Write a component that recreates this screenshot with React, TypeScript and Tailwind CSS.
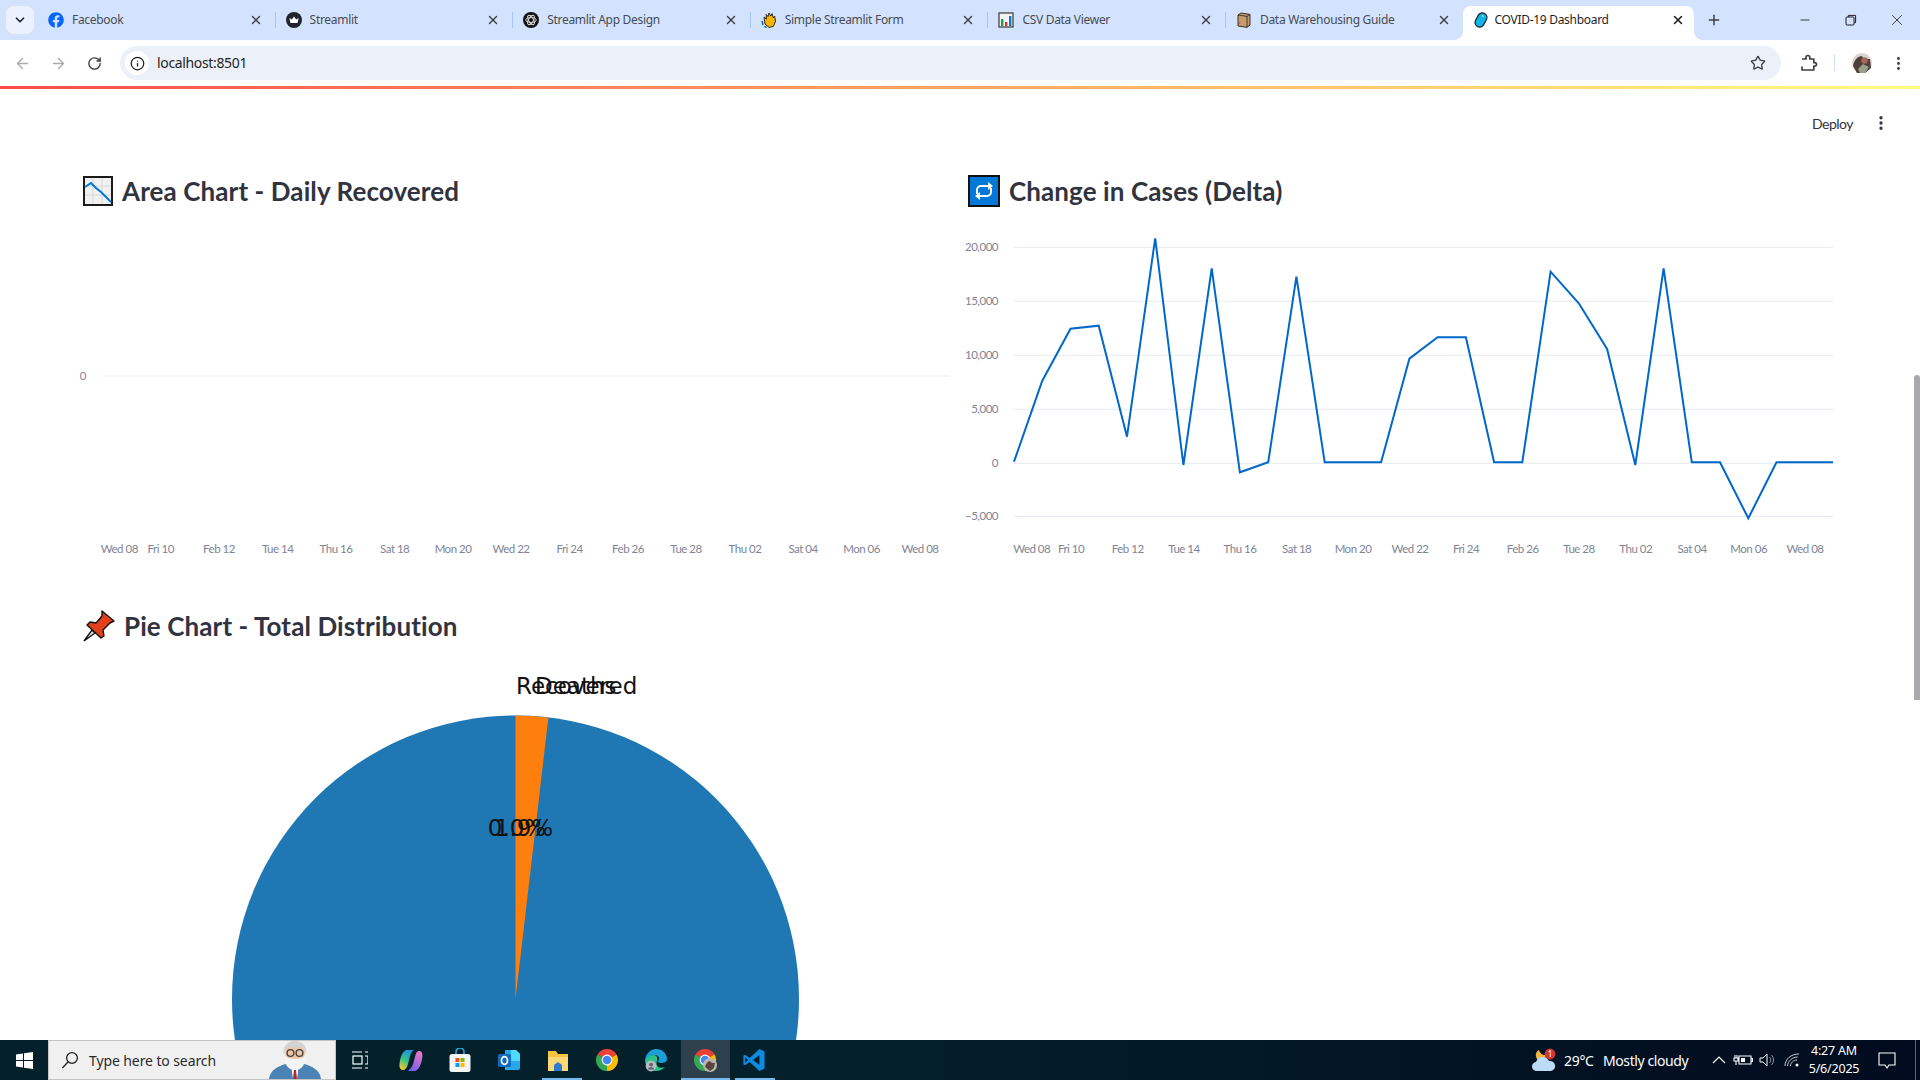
import {
  ArrowLeft,
  ArrowRight,
  ChevronDown,
  EllipsisVertical,
  Info,
  Minus,
  Plus,
  RotateCw,
  Star,
  X,
} from "lucide-react";
import type { ReactNode } from "react";
import { FaFacebook } from "react-icons/fa";

const uiFont = "font-['Noto_Sans','Open_Sans',sans-serif]";
const pageFont = "font-['Lato','Noto_Sans',sans-serif]";

/* ---------- favicons ---------- */

function CrownIcon() {
  return (
    <svg viewBox="0 0 16 16" className="h-4 w-4">
      <circle cx="8" cy="8" r="8" fill="#20242c" />
      <path d="M3.4 6l2.5 1.6L8 4.6l2.1 3L12.6 6l-1 5H4.4z" fill="#fff" />
    </svg>
  );
}

function KnotIcon() {
  return (
    <svg viewBox="0 0 16 16" className="h-4 w-4">
      <circle cx="8" cy="8" r="8" fill="#111" />
      <g fill="none" stroke="#ddd" strokeWidth="0.9">
        <ellipse cx="8" cy="8" rx="5.2" ry="2.4" />
        <ellipse cx="8" cy="8" rx="5.2" ry="2.4" transform="rotate(60 8 8)" />
        <ellipse cx="8" cy="8" rx="5.2" ry="2.4" transform="rotate(120 8 8)" />
      </g>
    </svg>
  );
}

function WaveIcon() {
  return (
    <svg viewBox="0 0 16 16" className="h-4 w-4">
      <path d="M3 5l1 7 4 3.4 4.4-1L14.6 9l-1-5-1.2 2L11 1.6 9.8 4 8 1 7 4.6 5.2 2.4 5.4 7z" fill="#f7b500" stroke="#1b1b1b" strokeWidth="0.9" />
      <path d="M1 9l1 4M3.4 14.4l2 1" stroke="#0e5a8a" strokeWidth="1.4" />
    </svg>
  );
}

function BarsIcon() {
  return (
    <svg viewBox="0 0 16 16" className="h-4 w-4">
      <rect x="1" y="1" width="14" height="14" fill="#f4f4f4" stroke="#444" strokeWidth="1.3" />
      <rect x="3" y="7" width="2.4" height="7" fill="#16a34a" />
      <rect x="7" y="10" width="2.4" height="4" fill="#e03131" />
      <rect x="11" y="4" width="2.4" height="10" fill="#0b78d1" />
    </svg>
  );
}

function BoxIcon() {
  return (
    <svg viewBox="0 0 16 16" className="h-4 w-4">
      <path d="M2 3l3-2 9 1.4V13l-3 2.4L2 14z" fill="#c89a6c" stroke="#222" strokeWidth="0.9" />
      <path d="M11 4.4V15M2 3l9 1.4L14 2.4" fill="none" stroke="#222" strokeWidth="0.8" />
      <rect x="3" y="10" width="1.4" height="2" fill="#e05a7a" />
    </svg>
  );
}

function PillIcon() {
  return (
    <svg viewBox="0 0 16 16" className="h-4 w-4">
      <rect x="3.4" y="0.6" width="9.2" height="14.8" rx="4.6" transform="rotate(28 8 8)" fill="#12b5e8" stroke="#10202c" strokeWidth="1.2" />
      <path d="M9 3.6l1.6 1" stroke="#c8f2ff" strokeWidth="1.2" />
    </svg>
  );
}

const tabs: { title: string; icon: ReactNode }[] = [
  { title: "Facebook", icon: <FaFacebook className="h-4 w-4 text-[#0866ff]" /> },
  { title: "Streamlit", icon: <CrownIcon /> },
  { title: "Streamlit App Design", icon: <KnotIcon /> },
  { title: "Simple Streamlit Form", icon: <WaveIcon /> },
  { title: "CSV Data Viewer", icon: <BarsIcon /> },
  { title: "Data Warehousing Guide", icon: <BoxIcon /> },
];

function TabStrip() {
  return (
    <div className={`flex h-10 shrink-0 items-end bg-[#d3e3fd] text-[12px] tracking-[-0.3px] ${uiFont}`}>
      <div className="mb-[6px] ml-[6px] mr-[4px] flex h-7 w-7 items-center justify-center rounded-lg bg-[#ebf2fd]">
        <ChevronDown size={14} strokeWidth={3} className="text-[#1f2937]" />
      </div>
      {tabs.map((tab, i) => (
        <div key={tab.title} className="flex h-10 w-[237.6px] items-center pl-[10px] text-[#474c54]">
          {tab.icon}
          <span className="ml-2 flex-1 truncate">{tab.title}</span>
          <X size={14} strokeWidth={2.4} className="mr-[12px] text-[#3c4043]" />
          {i < 5 ? <div className="h-4 w-px bg-[#a8c7fa]" /> : <div className="w-px" />}
        </div>
      ))}
      <div className="relative ml-[-1px] flex h-[34px] w-[231px] items-center rounded-t-lg bg-white pb-[6px] pl-[10px] text-[#1f1f1f]">
        <div className="absolute bottom-0 left-[-8px] h-2 w-2 bg-[radial-gradient(circle_at_0_0,#d3e3fd_7.5px,#ffffff_8px)]" />
        <div className="absolute bottom-0 right-[-8px] h-2 w-2 bg-[radial-gradient(circle_at_100%_0,#d3e3fd_7.5px,#ffffff_8px)]" />
        <PillIcon />
        <span className="ml-[6px] flex-1 truncate">COVID-19 Dashboard</span>
        <X size={14} strokeWidth={2.6} className="mr-[9px] text-[#1f1f1f]" />
      </div>
      <div className="mb-[6px] ml-[12px] flex h-7 w-4 items-center justify-center">
        <Plus size={16} strokeWidth={2.2} className="text-[#3c4043]" />
      </div>
      <div className="ml-auto flex h-10 items-center text-[#1f1f1f]">
        <div className="flex w-[46px] justify-center">
          <Minus size={14} strokeWidth={1.4} />
        </div>
        <div className="flex w-[46px] justify-center">
          <svg viewBox="0 0 12 12" className="h-3 w-3" fill="none" stroke="currentColor" strokeWidth="1">
            <rect x="1" y="3" width="8" height="8" rx="1" />
            <path d="M3.4 3V1.4h7.2v7.2H9" />
          </svg>
        </div>
        <div className="flex w-[46px] justify-center">
          <X size={18} strokeWidth={1.1} />
        </div>
      </div>
    </div>
  );
}

function Toolbar() {
  return (
    <div className={`flex h-[46px] shrink-0 items-center bg-white pl-1 ${uiFont}`}>
      <div className="flex w-9 justify-center text-[#a9abae]">
        <ArrowLeft size={17} strokeWidth={2} />
      </div>
      <div className="flex w-9 justify-center text-[#a9abae]">
        <ArrowRight size={17} strokeWidth={2} />
      </div>
      <div className="flex w-9 justify-center text-[#3c4043]">
        <RotateCw size={15} strokeWidth={2.2} />
      </div>
      <div className="ml-2 flex h-[34px] flex-1 items-center rounded-full bg-[#ecf1f9] pl-[5px] pr-[15px]">
        <div className="flex h-6 w-6 items-center justify-center rounded-full bg-white">
          <Info size={15} strokeWidth={2} className="text-[#1f1f1f]" />
        </div>
        <span className="ml-[8px] flex-1 pb-[2px] text-[14px] tracking-[-0.35px] text-[#1f1f1f]">localhost:8501</span>
        <Star size={16} strokeWidth={2} className="text-[#3c4043]" />
      </div>
      <div className="flex w-[139px] items-center">
        <svg viewBox="0 0 18 18" className="ml-[19px] h-[18px] w-[18px]" fill="none" stroke="#3c4043" strokeWidth="1.7" strokeLinejoin="round">
          <path d="M2 5h4V3.4a1.9 1.9 0 0 1 3.8 0V5h4v3.6h1a1.6 1.6 0 0 1 0 3.4h-1v4H2v-3.4" />
        </svg>
        <div className="ml-[16px] h-4 w-px bg-[#cfdcf0]" />
        <svg viewBox="0 0 20 20" className="ml-[17px] h-5 w-5">
          <circle cx="10" cy="10" r="10" fill="#d9d4cf" />
          <path d="M1 13c1-6 5-10 9-10 1 3 5 3 8 3l1 9-6 5H5z" fill="#4f3f3a" />
          <circle cx="12.5" cy="7.5" r="3.2" fill="#a4665c" />
          <path d="M6 16l5-5 6 3-4 6H8z" fill="#9a9f8c" />
        </svg>
        <EllipsisVertical size={17} strokeWidth={2.2} className="ml-[18px] text-[#3c4043]" />
      </div>
    </div>
  );
}

/* ---------- charts ---------- */

const deltaPoints = [
  725, 483, 326, 317, 650, 55, 735, 145, 757, 727, 170, 727, 727, 727, 416, 352, 352, 727, 727, 155, 250, 387, 735, 145,
  727, 727, 895, 727, 727, 727,
];

const linePath = deltaPoints
  .map((z, i) => `${i === 0 ? "M" : "L"}${(1014 + (i * 819) / 29).toFixed(1)} ${(220 + z / 3).toFixed(1)}`)
  .join(" ");

const areaTicks = [
  ["Wed 08", 119.3],
  ["Fri 10", 160.7],
  ["Feb 12", 219],
  ["Tue 14", 277.7],
  ["Thu 16", 336],
  ["Sat 18", 394.7],
  ["Mon 20", 453],
  ["Wed 22", 511],
  ["Fri 24", 569.5],
  ["Feb 26", 628],
  ["Tue 28", 686],
  ["Thu 02", 745],
  ["Sat 04", 803],
  ["Mon 06", 861.6],
  ["Wed 08", 920],
] as const;

const deltaTicks = [
  ["Wed 08", 1031.7],
  ["Fri 10", 1071],
  ["Feb 12", 1127.7],
  ["Tue 14", 1184],
  ["Thu 16", 1240],
  ["Sat 18", 1296.7],
  ["Mon 20", 1353],
  ["Wed 22", 1410],
  ["Fri 24", 1466],
  ["Feb 26", 1522.7],
  ["Tue 28", 1579],
  ["Thu 02", 1635.7],
  ["Sat 04", 1692],
  ["Mon 06", 1748.7],
  ["Wed 08", 1805],
] as const;

const deltaGrid = [
  ["20,000", 247.3],
  ["15,000", 301.3],
  ["10,000", 355.3],
  ["5,000", 409.3],
  ["0", 463.3],
  ["−5,000", 516.3],
] as const;

function AreaChart() {
  return (
    <svg viewBox="83 225 869 335" className={`block h-[335px] w-[869px] overflow-visible text-[11.5px] tracking-[-0.5px] ${pageFont}`}>
      <line x1="102.7" x2="950" y1="376" y2="376" stroke="#e6eaf1" />
      <text x="86" y="380" textAnchor="end" fill="#808495">0</text>
      {areaTicks.map(([label, x]) => (
        <text key={`${label}${x}`} x={x} y="553" textAnchor="middle" fill="#808495">{label}</text>
      ))}
    </svg>
  );
}

function DeltaChart() {
  return (
    <svg viewBox="968 225 872 335" className={`block h-[335px] w-[872px] overflow-visible text-[11.5px] tracking-[-0.5px] ${pageFont}`}>
      {deltaGrid.map(([label, y]) => (
        <g key={label}>
          <line x1="1014" x2="1833" y1={y} y2={y} stroke="#e6eaf1" />
          <text x="998" y={y + 4} textAnchor="end" fill="#808495">{label}</text>
        </g>
      ))}
      {deltaTicks.map(([label, x]) => (
        <text key={`${label}${x}`} x={x} y="553" textAnchor="middle" fill="#808495">{label}</text>
      ))}
      <path d={linePath} fill="none" stroke="#0068c9" strokeWidth="2" strokeLinejoin="miter" />
    </svg>
  );
}

function PieChart() {
  return (
    <svg viewBox="83 659 869 381" className="block h-[381px] w-[869px] text-[23px] font-['DejaVu_Sans',sans-serif]">
      <circle cx="515.5" cy="999" r="283.5" fill="#1f77b4" />
      <path d="M515.5 999V715.5A283.5 283.5 0 0 1 548.4 717.4Z" fill="#ff7f0e" />
      <text x="516" y="694" fill="#111">Recovered</text>
      <text x="535" y="694" fill="#111">Deaths</text>
      <text x="517" y="836" textAnchor="middle" fill="#111">0.0%</text>
      <text x="524" y="836" textAnchor="middle" fill="#111">1.9%</text>
    </svg>
  );
}

/* ---------- heading emoji ---------- */

function ChartDownEmoji() {
  return (
    <svg viewBox="0 0 30 30" className="h-[30px] w-[30px]">
      <rect x="1" y="1" width="28" height="28" fill="#f1f1f1" stroke="#1a1a1a" strokeWidth="2" />
      <path d="M10 2v26M19 2v26M2 10h26M2 19h26" stroke="#d8d8d8" strokeWidth="1" />
      <path d="M2 11l6-4 5 5 5 4 10 10" fill="none" stroke="#0078d7" strokeWidth="2" />
    </svg>
  );
}

function RepeatEmoji() {
  return (
    <svg viewBox="0 0 32 32" className="h-8 w-8">
      <rect x="1" y="1" width="30" height="30" fill="#0078d7" stroke="#111" strokeWidth="2" />
      <path d="M9 19v-4a4 4 0 0 1 4-4h10M23 13v4a4 4 0 0 1-4 4H9" fill="none" stroke="#fff" strokeWidth="2" />
      <path d="M20 7l5 4-5 4zM12 17l-5 4 5 4z" fill="#fff" />
    </svg>
  );
}

function PinEmoji() {
  return (
    <svg viewBox="0 0 33 32" className="ml-[-1px] h-8 w-[33px]">
      <path d="M2 31l8-11 3 3z" fill="#e6e6e6" stroke="#111" strokeWidth="1.4" />
      <path d="M20 1l12 10-4 2-7 7 1 6-3 2-14-13 3-3 6 1 6-7z" fill="#e2401b" stroke="#111" strokeWidth="1.4" strokeLinejoin="round" />
    </svg>
  );
}

function Heading({ icon, children }: { icon: ReactNode; children: ReactNode }) {
  return (
    <div className="flex items-center gap-[9px]">
      {icon}
      <h2 className={`text-[26px] font-bold leading-none tracking-[0.1px] text-[#31333f] ${pageFont}`}>{children}</h2>
    </div>
  );
}

function Dashboard() {
  return (
    <main className="relative min-h-0 flex-1 overflow-hidden bg-white">
      <div className={`flex h-[68px] items-center justify-end pr-[30px] text-[14px] tracking-[-0.5px] text-[#31333f] ${pageFont}`}>
        <span>Deploy</span>
        <EllipsisVertical size={18} strokeWidth={2.4} className="ml-[19px]" />
      </div>
      <div className="grid grid-cols-[869px_872px] gap-x-4 pl-[83px]">
        <div>
          <div className="flex h-[68px] items-center">
            <Heading icon={<ChartDownEmoji />}>Area Chart - Daily Recovered</Heading>
          </div>
          <AreaChart />
        </div>
        <div>
          <div className="flex h-[68px] items-center">
            <Heading icon={<RepeatEmoji />}>Change in Cases (Delta)</Heading>
          </div>
          <DeltaChart />
        </div>
      </div>
      <div className="mt-[33px] pl-[83px]">
        <div className="mb-[1px] flex h-[65px] items-center">
          <Heading icon={<PinEmoji />}>Pie Chart - Total Distribution</Heading>
        </div>
        <PieChart />
      </div>
      <div className="absolute right-0 top-[286px] h-[325px] w-[6px] rounded-t-sm bg-[#a9a9ae]" />
    </main>
  );
}

/* ---------- taskbar ---------- */

function Chrome({ badge }: { badge?: boolean }) {
  return (
    <svg viewBox="0 0 24 24" className="h-6 w-6">
      <path d="M12 12L2.47 6.5A11 11 0 0 1 21.53 6.5Z" fill="#ea4335" />
      <path d="M12 12L21.53 6.5A11 11 0 0 1 12 23Z" fill="#fbbc04" />
      <path d="M12 12L12 23A11 11 0 0 1 2.47 6.5Z" fill="#34a853" />
      <circle cx="12" cy="12" r="5.4" fill="#fff" />
      <circle cx="12" cy="12" r="4.3" fill="#4285f4" />
      {badge && (
        <g>
          <circle cx="17" cy="17" r="7" fill="#bdb5ae" />
          <path d="M12 19c1-4 3-6 5-6 1 2 3 2 5 2l-1 5-4 3z" fill="#5a4640" />
        </g>
      )}
    </svg>
  );
}

function TaskItem({ children, line, active }: { children: ReactNode; line?: string; active?: boolean }) {
  return (
    <div className={`relative flex h-10 w-[49px] items-center justify-center ${active ? "bg-[#2d404b]" : ""}`}>
      {children}
      {line && <div className={`absolute bottom-0 h-[2px] bg-[#76b9ed] ${line}`} />}
    </div>
  );
}

function Taskbar() {
  return (
    <footer className={`flex h-10 shrink-0 items-center bg-[linear-gradient(90deg,#03202b,#03202b_45%,#020b1f)] text-white ${uiFont}`}>
      <div className="flex w-[48px] justify-center">
        <svg viewBox="0 0 17 17" className="h-[17px] w-[17px]" fill="#fff">
          <path d="M0 2.4L7 1.4V8H0zM8 1.2L17 0V8H8zM0 9h7v6.6L0 14.6zM8 9h9v8l-9-1.2z" />
        </svg>
      </div>
      <div className="relative flex h-10 w-[288px] items-center overflow-hidden border border-[#c4c4c4] bg-[#f0f0f0] pl-[12px] text-[14px] text-[#2b2b2b]">
        <svg viewBox="0 0 18 18" className="h-[18px] w-[18px]" fill="none" stroke="#222" strokeWidth="1.3">
          <circle cx="11" cy="7" r="5.4" />
          <path d="M7 11l-5.6 6" />
        </svg>
        <span className="ml-[10px] tracking-[-0.1px]">Type here to search</span>
        <svg viewBox="0 0 52 38" className="absolute bottom-0 left-[220px] h-[38px] w-[52px]">
          <path d="M0 38c1-9 9-13 17-15h18c8 2 16 6 17 15z" fill="#4a83b4" />
          <path d="M22 23h8l-2 15h-4z" fill="#fff" />
          <path d="M25 29h2l1 9h-4z" fill="#b02a30" />
          <ellipse cx="26" cy="12" rx="10" ry="12" fill="#eec6a6" />
          <path d="M15 14c-2-9 4-14 11-14s13 5 11 14c-1-5-3-7-4-8-4 1-10 1-14 0-1 1-3 3-4 8z" fill="#d4d4d4" />
          <path d="M16 15c2 2 6 3 10 3s8-1 10-3c1 8-3 14-10 14s-11-6-10-14z" fill="#f4f4f4" />
          <g fill="none" stroke="#444" strokeWidth="1.4">
            <circle cx="21.5" cy="12" r="3.4" />
            <circle cx="30.5" cy="12" r="3.4" />
          </g>
        </svg>
      </div>
      <div className="flex w-[48px] justify-center">
        <svg viewBox="0 0 16 18" className="h-[18px] w-4" fill="none" stroke="#fff" strokeWidth="1.2">
          <path d="M0 1h10M0 17h10M13 1h3M13 17h3M13 5h3v8h-3" />
          <rect x="1" y="5" width="9" height="8" />
        </svg>
      </div>
      <div className="ml-[2.5px] flex">
        <TaskItem>
          <svg viewBox="0 0 24 24" className="h-6 w-6">
            <defs>
              <linearGradient id="cpA" x1="0.7" y1="0" x2="0.3" y2="1">
                <stop offset="0" stopColor="#1c8fe0" />
                <stop offset="0.55" stopColor="#35c48a" />
                <stop offset="1" stopColor="#f7c52f" />
              </linearGradient>
              <linearGradient id="cpB" x1="0.7" y1="0" x2="0.3" y2="1">
                <stop offset="0" stopColor="#e87ac2" />
                <stop offset="1" stopColor="#7c5cf0" />
              </linearGradient>
            </defs>
            <path d="M15 23h-6l2-2c2-2 3-4 3.6-7l1.6-6c.8-3.2 2-5 4-5 2.6 0 3.6 2.6 3.2 6-.6 6-3.4 14-8.4 14z" fill="url(#cpB)" />
            <path d="M8 2h7c-2 1-3 3-4 6l-2 8c-1 4-3 6-5 6-3 0-4-3-3.4-7C1.4 9 4 2 8 2z" fill="url(#cpA)" />
          </svg>
        </TaskItem>
        <TaskItem>
          <svg viewBox="0 0 24 24" className="h-6 w-6">
            <path d="M8 7V4a4 4 0 0 1 8 0v3" fill="none" stroke="#2aa6e0" strokeWidth="1.6" />
            <rect x="1.5" y="6" width="21" height="18" rx="2.5" fill="#f4f4f4" />
            <rect x="7.5" y="10" width="4" height="4" fill="#f25022" />
            <rect x="12.5" y="10" width="4" height="4" fill="#7fba00" />
            <rect x="7.5" y="15" width="4" height="4" fill="#00a4ef" />
            <rect x="12.5" y="15" width="4" height="4" fill="#ffb900" />
          </svg>
        </TaskItem>
        <TaskItem>
          <svg viewBox="0 0 24 24" className="h-6 w-6">
            <path d="M8 2h11l4 4v14a2 2 0 0 1-2 2H8z" fill="#28a8ea" />
            <path d="M14 2h5l4 4v7h-9z" fill="#50d9ff" />
            <rect x="1" y="6" width="13" height="13" rx="1.5" fill="#0f6cbd" />
            <ellipse cx="7.5" cy="12.5" rx="3" ry="3.8" fill="none" stroke="#fff" strokeWidth="1.7" />
          </svg>
        </TaskItem>
        <TaskItem line="left-[8px] w-[40px]">
          <svg viewBox="0 0 24 24" className="h-6 w-6">
            <path d="M2 3h8l2 3h10v17H2z" fill="#f9c440" />
            <path d="M2 9h20v14H2z" fill="#fcd975" />
            <path d="M8 23v-6l4-3 4 3v6z" fill="#2b7cd3" />
          </svg>
        </TaskItem>
        <TaskItem>
          <Chrome />
        </TaskItem>
        <TaskItem>
          <svg viewBox="0 0 24 24" className="h-6 w-6">
            <path d="M1 12C2 5 7 1 12 1c6 0 11 4 11 10 0 3-3 4-6 4-2 0-3-1-3-2 2-2 1-6-3-6-4 0-7 2-10 5z" fill="#1b9fd8" />
            <path d="M1 12c2-3 5-5 9-5 3 0 4 4 3 6-2 5 2 8 8 6-3 3-6 4-9 4-6 0-11-5-11-11z" fill="#29c28b" />
            <circle cx="7" cy="18" r="5.4" fill="#b8bcc0" />
            <circle cx="7" cy="16.6" r="1.9" fill="#5c646c" />
            <path d="M3.4 21.6a3.8 3.8 0 0 1 7.2 0z" fill="#5c646c" />
          </svg>
        </TaskItem>
        <TaskItem active line="left-0 w-full">
          <Chrome badge />
        </TaskItem>
        <TaskItem line="left-[5px] w-[40px]">
          <svg viewBox="0 0 24 24" className="h-6 w-6" fill="#0d8be0">
            <path d="M17.4 1L22.6 3.4V20.6L17.4 23 7.6 13.9 3.2 17.2 1.4 16.2V7.8L3.2 6.8 7.6 10.1zM17.4 7.2L10.9 12 17.4 16.8zM3.2 9.2V14.8L6 12z" fillRule="evenodd" />
          </svg>
        </TaskItem>
      </div>
      <div className="ml-auto flex h-10 w-[388px] items-center text-[14px]">
        <svg viewBox="0 0 24 24" className="h-6 w-6">
          <path d="M7 2a6 6 0 0 0 1 11 6 6 0 0 0 6-6 6 6 0 0 1-7-5z" fill="#f5b83d" />
          <path d="M5 23a4.5 4.5 0 0 1-1-9 7 7 0 0 1 13-1 5 5 0 0 1 2 10z" fill="#bcdcf6" />
          <circle cx="18" cy="6" r="5.4" fill="#d13438" />
          <text x="18" y="9" textAnchor="middle" fontSize="8" fill="#fff">1</text>
        </svg>
        <span className="ml-2 w-[39px] tracking-[-0.3px]">29°C</span>
        <span className="w-[108px] tracking-[-0.4px]">Mostly cloudy</span>
        <svg viewBox="0 0 16 16" className="h-4 w-4" fill="none" stroke="#fff" strokeWidth="1.1">
          <path d="M2 11l6-6 6 6" />
        </svg>
        <svg viewBox="0 0 20 16" className="ml-[6px] h-4 w-5" fill="none" stroke="#fff" strokeWidth="1.1">
          <path d="M6 4h12v8H6zM18 6.5h1.4v3H18M1 6h4v3H1zM2 6V3M4 6V3M3 9v4" />
          <rect x="8" y="6" width="4" height="4" fill="#fff" stroke="none" />
        </svg>
        <svg viewBox="0 0 16 16" className="ml-[6px] h-4 w-4" fill="none" stroke="#fff" strokeWidth="1">
          <path d="M1 6h3l4-4v12l-4-4H1z" />
          <path d="M10.5 5a4 4 0 0 1 0 6M12.5 3a7 7 0 0 1 0 10" stroke="#8f98a3" />
        </svg>
        <svg viewBox="0 0 16 16" className="ml-[9px] h-4 w-4" fill="none" stroke="#c6ccd2" strokeWidth="1">
          <path d="M1 14C1 7 7 2 15 2M3.6 14c0-5 5-9 10-9M6.4 14c0-3 3-6 6.6-6" />
          <circle cx="13" cy="13" r="1.5" fill="#fff" stroke="none" />
        </svg>
        <div className="ml-[-1px] w-[70px] text-center text-[12.5px] leading-[18px] tracking-[-0.2px]">
          <div>4:27 AM</div>
          <div>5/6/2025</div>
        </div>
        <svg viewBox="0 0 20 18" className="ml-[8px] h-[18px] w-5" fill="none" stroke="#fff" strokeWidth="1.1">
          <path d="M2 2h16v12h-6l-2 3-2-3H2z" />
        </svg>
        <div className="ml-[18px] h-10 w-px bg-[#5c646c]" />
      </div>
    </footer>
  );
}

export default function App() {
  return (
    <div className="flex h-[1080px] w-[1920px] flex-col overflow-hidden bg-white">
      <TabStrip />
      <Toolbar />
      <div className="h-[3px] shrink-0 bg-[linear-gradient(90deg,#ff4b4b,#fffd80)]" />
      <Dashboard />
      <Taskbar />
    </div>
  );
}
